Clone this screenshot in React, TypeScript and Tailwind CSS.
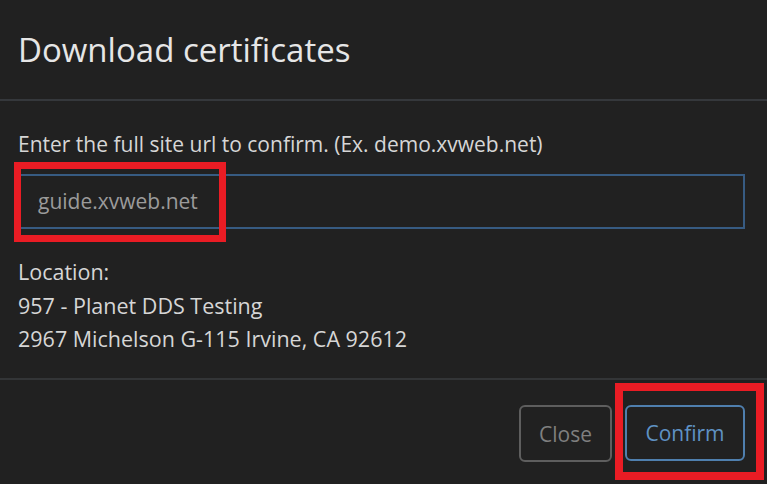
import React from "react";

export default function App() {
  const font = { fontFamily: '"Open Sans", "Noto Sans", sans-serif' };
  return (
    <div
      className="relative w-[767px] h-[484px] bg-[#212121] flex flex-col overflow-hidden"
      style={font}
    >
      <div className="h-[101px] shrink-0 border-b-2 border-[#35383c] flex items-center px-[18px]">
        <h1 className="text-[33px] leading-none text-[#e6e6e6]">Download certificates</h1>
      </div>
      <div className="h-[279px] shrink-0 border-b-2 border-[#333537] px-[18px] pt-[27px] flex flex-col">
        <p className="text-[21px] leading-[33px] text-[#d6d6d6]">
          Enter the full site url to confirm. (Ex. demo.xvweb.net)
        </p>
        <div className="mt-[13px] w-[727px] h-[55px] border-2 border-[#375b82] flex items-center pl-[18px]">
          <span className="text-[21px] text-[#9b9b9b]">guide.xvweb.net</span>
        </div>
        <div className="mt-[26px] text-[21.5px] leading-[33.5px] text-[#d6d6d6]">
          <div>Location:</div>
          <div>957 - Planet DDS Testing</div>
          <div>2967 Michelson G-115 Irvine, CA 92612</div>
        </div>
      </div>
      <div className="flex-1 flex justify-end items-start pt-[25px] pr-[22px] gap-[13px]">
        <button className="w-[93px] h-[57px] pt-[2px] rounded-[6px] border-2 border-[#5e5e5e] text-[21px] text-[#7f7f7f]">
          Close
        </button>
        <button className="w-[120px] h-[56px] pt-[2px] rounded-[6px] border-2 border-[#4f7fae] text-[21px] text-[#5f92c4]">
          Confirm
        </button>
      </div>
      <div className="absolute left-[14px] top-[162px] w-[212px] h-[80px] border-[7px] border-[#ea1c24]" />
      <div className="absolute left-[615px] top-[383px] w-[149px] h-[97px] border-[8px] border-[#ea1c24]" />
    </div>
  );
}
